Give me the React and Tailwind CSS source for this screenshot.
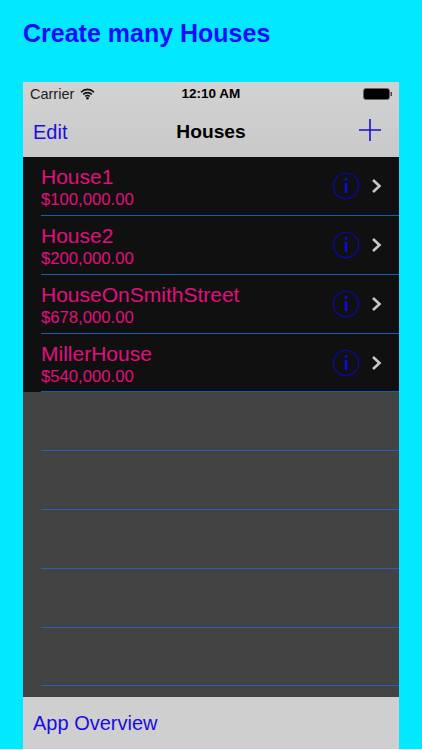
const houses = [
  { name: "House1", price: "$100,000.00", height: "h-[59px]" },
  { name: "House2", price: "$200,000.00", height: "h-[59px]" },
  { name: "HouseOnSmithStreet", price: "$678,000.00", height: "h-[59px]" },
  { name: "MillerHouse", price: "$540,000.00", height: "h-[58px]" },
];

const emptyRows = ["h-[59px]", "h-[59px]", "h-[59px]", "h-[59px]", "h-[58px]"];

function InfoIcon() {
  return (
    <svg width="28" height="28" viewBox="0 0 28 28" fill="none" className="shrink-0">
      <circle cx="14" cy="14" r="12.6" stroke="#0a0a9c" strokeWidth="1.4" />
      <rect x="12.7" y="11" width="2.6" height="10" fill="#0c0ce0" />
      <rect x="12.7" y="6" width="2.6" height="2.8" fill="#0c0ce0" />
    </svg>
  );
}

function Chevron() {
  return (
    <svg width="11" height="16" viewBox="0 0 11 16" fill="none" className="shrink-0">
      <path d="M2 2l6.5 6L2 14" stroke="#c8c8c8" strokeWidth="2.6" />
    </svg>
  );
}

function HouseRow({ house }) {
  return (
    <div className={`${house.height} pl-[18px]`}>
      <div className="flex h-full items-center border-b border-[#1f5cb0] pr-[17px]">
        <div className="min-w-0 flex-1 pt-[3px]">
          <div className="text-[21px] leading-[24px] text-[#e0107e]">{house.name}</div>
          <div className="text-[16.7px] leading-[21px] text-[#e0107e]">{house.price}</div>
        </div>
        <InfoIcon />
        <div className="ml-[11px]">
          <Chevron />
        </div>
      </div>
    </div>
  );
}

export default function App() {
  return (
    <div className="flex h-[750px] w-[422px] flex-col overflow-hidden bg-[#00e9ff] font-['Liberation_Sans',Arial,sans-serif]">
      <h1 className="h-[82px] pl-[23px] pt-[18px] text-[25px] leading-[30px] font-bold text-[#1a0dff]">
        Create many Houses
      </h1>

      <div className="mx-[23px] flex flex-1 flex-col">
        <div className="h-[75px] bg-gradient-to-b from-[#d2d2d2] to-[#c9c9c9]">
          <div className="grid h-[25px] grid-cols-3 items-center pl-[7px] pr-[7px] text-[14.5px] text-[#222]">
            <div className="flex items-center gap-[6px]">
              <span>Carrier</span>
              <svg width="15" height="12" viewBox="0 0 15 12" fill="none" className="mb-[2px]">
                <path d="M1 4.2a9 9 0 0 1 13 0M3.2 6.4a6 6 0 0 1 8.6 0M5.3 8.5a3 3 0 0 1 4.4 0" stroke="#111" strokeWidth="1.6" />
                <circle cx="7.5" cy="10.2" r="1.3" fill="#111" />
              </svg>
            </div>
            <span className="text-center text-[13.5px] font-bold text-black">12:10 AM</span>
            <div className="flex justify-end">
              <svg width="29" height="12" viewBox="0 0 29 12" className="mb-[1px]">
                <rect x="0.5" y="0.5" width="26" height="11" rx="2.5" fill="#000" stroke="#666" />
                <rect x="27.5" y="4" width="1.5" height="4" fill="#444" />
              </svg>
            </div>
          </div>
          <div className="grid h-[50px] grid-cols-3 items-center pl-[10px] pr-[18px]">
            <span className="text-[20px] text-[#1a0de0]">Edit</span>
            <span className="ml-[8px] text-center text-[19.2px] font-bold whitespace-nowrap text-black">Houses</span>
            <div className="flex justify-end">
              <svg width="22" height="22" viewBox="0 0 22 22" className="mb-[4px]">
                <path d="M11 0v22M0 11h22" stroke="#1a0de0" strokeWidth="1.6" />
              </svg>
            </div>
          </div>
        </div>

        <div className="flex-1 bg-[#434343]">
          <div className="bg-[#101010]">
            {houses.map((house) => (
              <HouseRow key={house.name} house={house} />
            ))}
          </div>
          {emptyRows.map((height, i) => (
            <div key={i} className={`${height} pl-[18px]`}>
              <div className="h-full border-b border-[#2a60b4]" />
            </div>
          ))}
        </div>

        <div className="flex h-[52px] items-center bg-[#cfcfcf] pl-[10px] text-[20px] text-[#1a0de0]">
          App Overview
        </div>
      </div>

      <div className="h-[1px] bg-[#e8fdff]" />
    </div>
  );
}
